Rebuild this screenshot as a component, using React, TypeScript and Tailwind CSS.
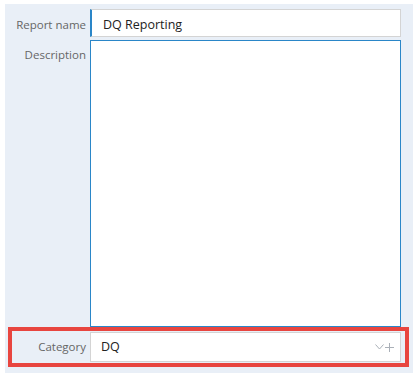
const labelCls =
  'shrink-0 pr-[4px] text-right text-[11.5px] text-[#666] font-["Open_Sans",sans-serif]'

function FieldLabel({ text, className = '' }: { text: string; className?: string }) {
  return <div className={`${labelCls} ${className}`}>{text}</div>
}

function SelectIcons() {
  return (
    <div className="flex items-center gap-[1px] text-[#aab0b8]">
      <svg width="9" height="6" viewBox="0 0 9 6" fill="none">
        <path d="M0.5 0.5 L4.5 5 L8.5 0.5" stroke="currentColor" strokeWidth="1" />
      </svg>
      <svg width="9" height="9" viewBox="0 0 9 9" fill="none">
        <path d="M4.5 0 V9 M0 4.5 H9" stroke="currentColor" strokeWidth="1" />
      </svg>
    </div>
  )
}

export default function App() {
  return (
    <div className="w-[418px] h-[379px] bg-white pt-[4px] pl-[5px]">
      <div className="w-[408px] h-[369px] bg-[#e9eff7] flex flex-col pt-[5px]">
        {/* report name */}
        <div className="flex items-center h-[28px]">
          <FieldLabel text="Report name" className="w-[85px] pt-[3px]" />
          <div className="w-[311px] h-[28px] bg-white border border-[#d4d4d4] border-l-2 border-l-[#2a86c8] flex items-center pl-[11px] pt-[4px] text-[12.5px] text-[#222] font-['Open_Sans',sans-serif]">
            DQ Reporting
          </div>
        </div>

        {/* description */}
        <div className="flex mt-[3px]">
          <FieldLabel text="Description" className="w-[85px] pt-[6px]" />
          <textarea className="w-[311px] h-[287px] bg-white border border-[#2a86c8] resize-none outline-none" />
        </div>

        {/* category (highlighted) */}
        <div className="ml-[3px] w-[401px] h-[40px] border-4 border-[#e8453f] flex items-center">
          <FieldLabel text="Category" className="w-[78px]" />
          <div className="w-[311px] h-[30px] bg-white border border-[#d4d4d4] flex items-center justify-between pl-[10px] pr-[6px]">
            <span className="text-[12.5px] text-[#222] font-['Open_Sans',sans-serif]">DQ</span>
            <SelectIcons />
          </div>
        </div>
      </div>
    </div>
  )
}
